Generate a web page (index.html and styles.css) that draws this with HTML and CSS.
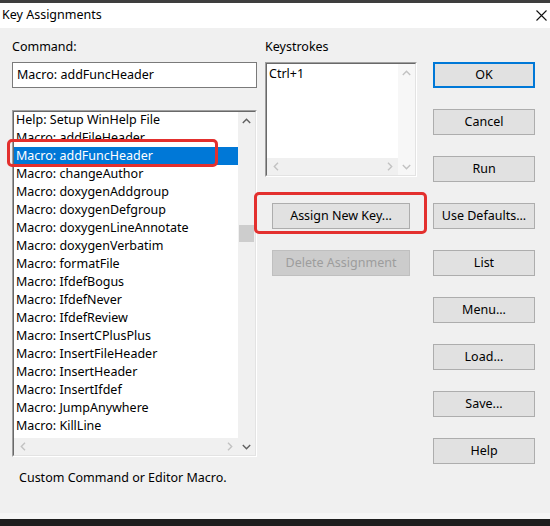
FILE: index.html
```html
<!DOCTYPE html>
<html>
<head>
<meta charset="utf-8">
<title>Key Assignments</title>
<link rel="stylesheet" href="styles.css">
</head>
<body>
<div class="window">
  <div class="topbar"></div>
  <div class="titlebar">
    <span class="title">Key Assignments</span>
    <svg class="close" width="11" height="11" viewBox="0 0 11 11"><path d="M0.5 0.5 L10.5 10.5 M10.5 0.5 L0.5 10.5" stroke="#111" stroke-width="1.1" fill="none"/></svg>
  </div>
  <div class="dialog">
    <div class="col-left">
      <div class="label">Command:</div>
      <div class="textbox">Macro: addFuncHeader</div>
      <div class="listbox">
        <div class="lb-inner">
          <div class="items">
            <div class="item">Help: Setup WinHelp File</div>
            <div class="item">Macro: addFileHeader</div>
            <div class="item selected">Macro: addFuncHeader</div>
            <div class="item">Macro: changeAuthor</div>
            <div class="item">Macro: doxygenAddgroup</div>
            <div class="item">Macro: doxygenDefgroup</div>
            <div class="item">Macro: doxygenLineAnnotate</div>
            <div class="item">Macro: doxygenVerbatim</div>
            <div class="item">Macro: formatFile</div>
            <div class="item">Macro: IfdefBogus</div>
            <div class="item">Macro: IfdefNever</div>
            <div class="item">Macro: IfdefReview</div>
            <div class="item">Macro: InsertCPlusPlus</div>
            <div class="item">Macro: InsertFileHeader</div>
            <div class="item">Macro: InsertHeader</div>
            <div class="item">Macro: InsertIfdef</div>
            <div class="item">Macro: JumpAnywhere</div>
            <div class="item">Macro: KillLine</div>
          </div>
          <div class="vscroll">
            <div class="sb-btn"><svg width="9" height="6" viewBox="0 0 9 6"><path d="M0.8 5 L4.5 1.3 L8.2 5" class="chev dark"/></svg></div>
            <div class="sb-track"><div class="thumb"></div></div>
            <div class="sb-btn"><svg width="9" height="6" viewBox="0 0 9 6"><path d="M0.8 1 L4.5 4.7 L8.2 1" class="chev dark"/></svg></div>
          </div>
          <div class="hscroll">
            <div class="sb-btn"><svg width="6" height="9" viewBox="0 0 6 9"><path d="M5 0.8 L1.3 4.5 L5 8.2" class="chev light"/></svg></div>
            <div class="sb-btn"><svg width="6" height="9" viewBox="0 0 6 9"><path d="M1 0.8 L4.7 4.5 L1 8.2" class="chev light"/></svg></div>
          </div>
        </div>
      </div>
      <div class="status">Custom Command or Editor Macro.</div>
    </div>

    <div class="col-mid">
      <div class="label">Keystrokes</div>
      <div class="keybox">
        <div class="kb-inner">
          <div class="keys">Ctrl+1</div>
          <div class="vscroll kb-v">
            <div class="sb-btn"><svg width="9" height="6" viewBox="0 0 9 6"><path d="M0.8 5 L4.5 1.3 L8.2 5" class="chev light"/></svg></div>
            <div class="sb-track"></div>
            <div class="sb-btn"><svg width="9" height="6" viewBox="0 0 9 6"><path d="M0.8 1 L4.5 4.7 L8.2 1" class="chev light"/></svg></div>
          </div>
          <div class="hscroll">
            <div class="sb-btn"><svg width="6" height="9" viewBox="0 0 6 9"><path d="M5 0.8 L1.3 4.5 L5 8.2" class="chev light"/></svg></div>
            <div class="sb-btn"><svg width="6" height="9" viewBox="0 0 6 9"><path d="M1 0.8 L4.7 4.5 L1 8.2" class="chev light"/></svg></div>
          </div>
        </div>
      </div>
      <div class="btn btn-assign">Assign New Key...</div>
      <div class="btn btn-delete disabled">Delete Assignment</div>
    </div>

    <div class="col-right">
      <div class="btn default">OK</div>
      <div class="btn">Cancel</div>
      <div class="btn">Run</div>
      <div class="btn">Use Defaults...</div>
      <div class="btn">List</div>
      <div class="btn">Menu...</div>
      <div class="btn">Load...</div>
      <div class="btn">Save...</div>
      <div class="btn">Help</div>
    </div>

    <div class="mark mark-cmd"></div>
    <div class="mark mark-assign"></div>
  </div>
  <div class="bottom-edge"></div>
  <div class="taskbar"></div>
</div>
</body>
</html>
```

FILE: styles.css
```css
* { box-sizing: border-box; }
html, body { margin: 0; padding: 0; }
body {
  font-family: "Noto Sans", "Open Sans", sans-serif;
  font-size: 12.5px;
  color: #000;
  background: #f0f0f0;
}
.window {
  width: 550px;
  height: 526px;
  display: flex;
  flex-direction: column;
  overflow: hidden;
}
.topbar { height: 3px; background: #3e3e3e; }
.titlebar {
  height: 25px;
  background: #ffffff;
  display: flex;
  align-items: center;
  justify-content: space-between;
  padding: 0 2px 0 2px;
}
.title { font-size: 12.5px; line-height: 18px; margin-top: -1px; }
.close { margin-right: 1px; }

.dialog {
  position: relative;
  height: 485px;
  background: #f0f0f0;
  display: flex;
  padding: 10px 0 0 12px;
}
.label { height: 18px; line-height: 18px; }

.col-left { width: 245px; display: flex; flex-direction: column; }
.textbox {
  margin-top: 6px;
  height: 26px;
  border: 1px solid #7a7a7a;
  background: #fff;
  padding-left: 4px;
  line-height: 23px;
  white-space: nowrap;
}
.listbox {
  margin-top: 22px;
  height: 347px;
  border: 1px solid;
  border-color: #a0a0a0 #ffffff #ffffff #a0a0a0;
}
.lb-inner, .kb-inner {
  height: 100%;
  border: 1px solid;
  border-color: #696969 #e3e3e3 #e3e3e3 #696969;
  background: #fff;
  display: grid;
  grid-template-columns: 1fr 17px;
  grid-template-rows: 1fr 17px;
}
.items {
  grid-column: 1; grid-row: 1;
  overflow: hidden;
}
.item {
  height: 18px;
  line-height: 17px;
  padding-left: 2px;
  white-space: nowrap;
}
.item:first-child { margin-top: -1px; }
.item.selected { background: #0078d7; color: #fff; }

.vscroll {
  grid-column: 2; grid-row: 1 / span 2;
  background: #f0f0f0;
  display: flex;
  flex-direction: column;
}
.sb-btn {
  width: 17px; height: 17px;
  flex: none;
  display: flex; align-items: center; justify-content: center;
}
.sb-track { flex: 1; position: relative; }
.thumb {
  margin: 96px 1px 0 1px;
  height: 17px;
  background: #cdcdcd;
}
.hscroll {
  grid-column: 1; grid-row: 2;
  background: #f0f0f0;
  display: flex;
  justify-content: space-between;
}
.chev { fill: none; stroke-width: 1.4; }
.chev.dark { stroke: #606060; }
.chev.light { stroke: #c2c2c2; }
.status { margin-top: 12px; padding-left: 7px; line-height: 18px; height: 18px; }

.col-mid { width: 162px; margin-left: 8px; display: flex; flex-direction: column; }
.keybox {
  margin-top: 6px;
  width: 152px;
  height: 115px;
  border: 1px solid;
  border-color: #a0a0a0 #ffffff #ffffff #a0a0a0;
}
.keys { padding: 1px 0 0 2px; line-height: 18px; grid-column: 1; grid-row: 1; }
.kb-v { background: #f7f7f7; }

.btn {
  height: 26px;
  background: #e1e1e1;
  border: 1px solid #adadad;
  display: flex; align-items: center; justify-content: center;
  white-space: nowrap;
  line-height: 18px;
}
.btn.default { border: 2px solid #0078d7; }
.btn.disabled { background: #cccccc; border-color: #bfbfbf; color: #9d9d9d; }
.btn-assign { margin: 26px 0 0 7px; width: 138px; }
.btn-delete { margin: 21px 0 0 7px; width: 138px; }

.col-right {
  width: 102px;
  margin-left: 6px;
  padding-top: 24px;
  display: flex;
  flex-direction: column;
  gap: 21px;
}

.mark {
  position: absolute;
  border: 3px solid #e3302e;
  border-radius: 5px;
}
.mark-cmd { left: 7px; top: 111px; width: 211px; height: 28px; }
.mark-assign { left: 254px; top: 164px; width: 173px; height: 42px; }

.bottom-edge { height: 6px; background: #f5f5f5; }
.taskbar { height: 7px; background: #1e1e1e; }
```
